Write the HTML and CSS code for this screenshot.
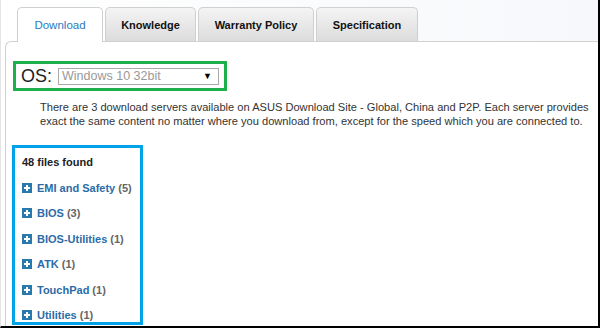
FILE: index.html
```html
<!DOCTYPE html>
<html lang="en">
  <head>
    <meta charset="UTF-8" />
    <title>Support - Download</title>
    <link rel="stylesheet" href="styles.css">
  </head>
  <body>
    <div class="frame">
      <div class="tabs">
        <div class="tab active">Download</div>
        <div class="tab">Knowledge</div>
        <div class="tab">Warranty Policy</div>
        <div class="tab">Specification</div>
      </div>
      <div class="panel">
        <div class="os-box">
          <span class="os-label">OS:</span>
          <div class="os-select">
            <span>Windows 10 32bit</span>
            <span class="arrow">&#9660;</span>
          </div>
        </div>
        <p class="note">
          There are 3 download servers available on ASUS Download Site - Global, China and P2P. Each server provides<br />
          exact the same content no matter where you download from, except for the speed which you are connected to.
        </p>
        <div class="files-box">
          <div class="files-count">48 files found</div>
          <ul class="file-list">
            <li><span class="plus"></span><a href="#">EMI and Safety</a> <span class="num">(5)</span></li>
            <li><span class="plus"></span><a href="#">BIOS</a> <span class="num">(3)</span></li>
            <li><span class="plus"></span><a href="#">BIOS-Utilities</a> <span class="num">(1)</span></li>
            <li><span class="plus"></span><a href="#">ATK</a> <span class="num">(1)</span></li>
            <li><span class="plus"></span><a href="#">TouchPad</a> <span class="num">(1)</span></li>
            <li><span class="plus"></span><a href="#">Utilities</a> <span class="num">(1)</span></li>
          </ul>
        </div>
      </div>
    </div>
  </body>
</html>
```

FILE: styles.css
```css
body {
  margin: 0;
  font-family: "Liberation Sans", Arial, sans-serif;
  background: #fff;
}
.frame {
  width: 597px;
  height: 326px;
  border-left: 1px solid #e4e4e4;
  border-right: 2px solid #000;
  border-bottom: 2px solid #000;
  overflow: hidden;
  background: linear-gradient(to right, #fff, #f6f8fb);
}
.tabs {
  display: flex;
  gap: 2px;
  padding: 7px 0 0 16px;
  height: 34px;
  box-sizing: content-box;
}
.tab {
  height: 34px;
  box-sizing: border-box;
  display: flex;
  align-items: center;
  justify-content: center;
  white-space: nowrap;
  font-size: 11px;
  font-weight: bold;
  color: #111;
  border: 1px solid #d0d0d0;
  border-bottom: none;
  border-radius: 5px 5px 0 0;
  background: linear-gradient(#f4f4f4, #dcdcdc);
}
.tab:nth-child(1) { width: 86px; }
.tab:nth-child(2) { width: 91px; }
.tab:nth-child(3) { width: 116px; }
.tab:nth-child(4) { width: 102px; }
.tab.active {
  background: #fff;
  color: #2b7bbf;
  font-weight: normal;
  font-size: 11.5px;
  height: 35px;
  position: relative;
  z-index: 1;
}
.panel {
  margin-left: 4px;
  height: 300px;
  background: #fff;
  border-top: 1px solid #d0d0d0;
  border-left: 1px solid #d0d0d0;
  border-top-left-radius: 6px;
  padding: 19px 0 0 7px;
  box-sizing: border-box;
}
.os-box {
  width: 214px;
  height: 30px;
  box-sizing: border-box;
  border: 3px solid #1db04b;
  display: flex;
  align-items: center;
  padding-left: 5px;
  gap: 6px;
}
.os-label {
  font-size: 18px;
  color: #222;
}
.os-select {
  width: 161px;
  height: 17px;
  box-sizing: border-box;
  border: 1px solid #aaa;
  display: flex;
  align-items: center;
  justify-content: space-between;
  padding: 0 6px 0 3px;
  font-size: 12.5px;
  color: #999;
}
.arrow {
  color: #000;
  font-size: 9px;
}
.note {
  margin: 9px 0 0 27px;
  font-size: 11.1px;
  line-height: 14px;
  white-space: nowrap;
  color: #333;
}
.files-box {
  margin: 17px 0 0 -1px;
  width: 131px;
  height: 180px;
  box-sizing: border-box;
  border: 3px solid #00a2e8;
  padding: 7px 0 0 7px;
}
.files-count {
  font-size: 11px;
  font-weight: bold;
  color: #222;
  line-height: 14px;
}
.file-list {
  list-style: none;
  margin: 6px 0 0;
  padding: 0;
}
.file-list li {
  display: flex;
  align-items: center;
  gap: 5px;
  height: 25.5px;
  font-size: 11px;
  font-weight: bold;
}
.file-list a {
  color: #2b6ca8;
  text-decoration: none;
}
.num {
  color: #666;
  margin-left: -2px;
}
.plus {
  width: 10px;
  height: 10px;
  background:
    linear-gradient(#fff, #fff) center / 6px 2px no-repeat,
    linear-gradient(#fff, #fff) center / 2px 6px no-repeat,
    #2a79ad;
}
```
